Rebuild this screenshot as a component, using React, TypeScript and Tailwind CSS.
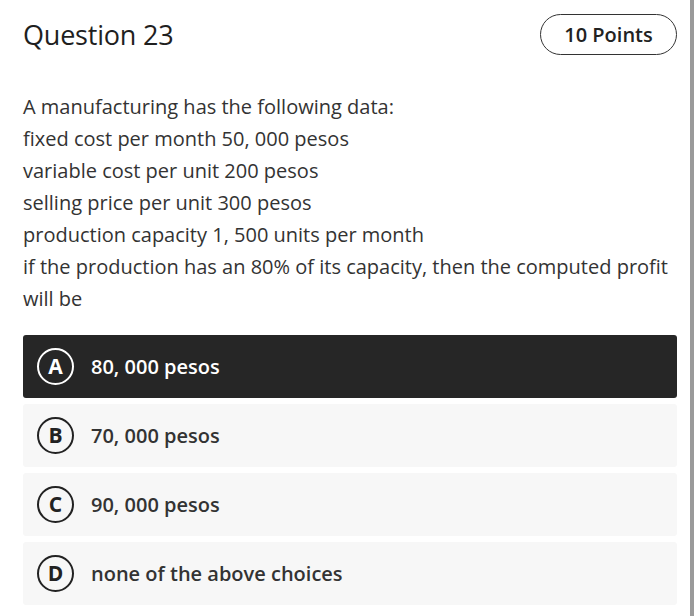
import React from 'react'

const lines = [
  'A manufacturing has the following data:',
  'fixed cost per month 50, 000 pesos',
  'variable cost per unit 200 pesos',
  'selling price per unit 300 pesos',
  'production capacity 1, 500 units per month',
  'if the production has an 80% of its capacity, then the computed profit will be',
]

const choices = [
  { key: 'A', label: '80, 000 pesos', selected: true },
  { key: 'B', label: '70, 000 pesos' },
  { key: 'C', label: '90, 000 pesos' },
  { key: 'D', label: 'none of the above choices' },
]

export default function App() {
  return (
    <div className="w-[700px] h-[616px] bg-white overflow-hidden flex" style={{ fontFamily: '"Open Sans", sans-serif' }}>
      <div className="w-[690px] h-full pl-[23px] pr-[13px]">
        {/* Header */}
        <div className="flex items-center justify-between pt-[14px] h-[55px]">
          <div className="text-[27px] leading-none font-medium text-[#1f1f1f] tracking-[-0.2px]">Question 23</div>
          <div className="h-[41px] w-[137px] rounded-full border-[1.5px] border-[#333] flex items-center justify-center text-[20px] font-semibold text-[#222]">
            10 Points
          </div>
        </div>

        {/* Question body */}
        <div className="mt-[36px] text-[20px] leading-[32px] text-[#333]">
          {lines.map(l => <div key={l}>{l}</div>)}
        </div>

        {/* Choices */}
        <div className="mt-[20px] flex flex-col gap-[6px]">
          {choices.map(c => (
            <div key={c.key}
              className={c.selected
                ? 'h-[63px] rounded-[3px] bg-[#262626] flex items-center pl-[14px] gap-[17px]'
                : 'h-[63px] rounded-[3px] bg-[#f7f7f7] flex items-center pl-[14px] gap-[17px]'}>
              <div className={c.selected
                ? 'w-[37px] h-[37px] rounded-full border-[2.5px] border-white text-white flex items-center justify-center text-[21px] font-bold'
                : 'w-[37px] h-[37px] rounded-full border-[2.5px] border-[#222] text-[#222] flex items-center justify-center text-[21px] font-bold'}>
                {c.key}
              </div>
              <span className={c.selected ? 'text-[20px] font-semibold text-white' : 'text-[20px] font-semibold text-[#333]'}>
                {c.label}
              </span>
            </div>
          ))}
        </div>
      </div>
      <div className="w-[4px] h-full bg-[#9a9a9a]" />
    </div>
  )
}
